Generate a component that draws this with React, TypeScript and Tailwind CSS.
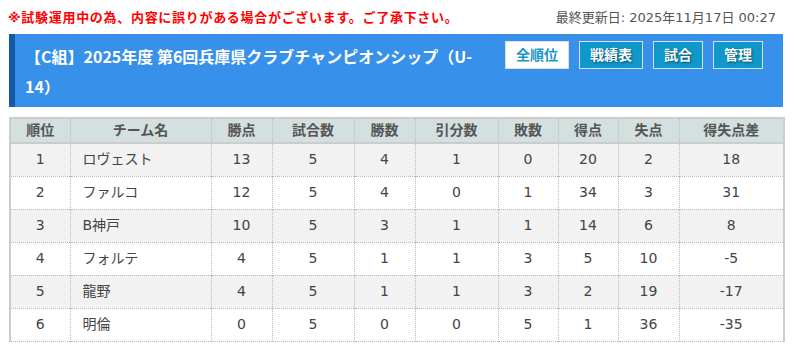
import React from "react";

const rows = [
  ["1", "ロヴェスト", "13", "5", "4", "1", "0", "20", "2", "18"],
  ["2", "ファルコ", "12", "5", "4", "0", "1", "34", "3", "31"],
  ["3", "B神戸", "10", "5", "3", "1", "1", "14", "6", "8"],
  ["4", "フォルテ", "4", "5", "1", "1", "3", "5", "10", "-5"],
  ["5", "龍野", "4", "5", "1", "1", "3", "2", "19", "-17"],
  ["6", "明倫", "0", "5", "0", "0", "5", "1", "36", "-35"],
];

const heads = ["順位", "チーム名", "勝点", "試合数", "勝数", "引分数", "敗数", "得点", "失点", "得失点差"];
const widths = [60, 141, 61, 82, 61, 83, 60, 60, 61, 105];

const font = { fontFamily: '"DejaVu Sans", "Noto Sans CJK JP", sans-serif' };

export default function App() {
  return (
    <div className="w-[796px] h-[351px] bg-white overflow-hidden" style={font}>
      <div className="flex items-center justify-between h-[34px] pl-[8px] pr-[20px] pt-[2px]">
        <span className="text-[13px] font-bold text-[#ff0000] tracking-[0.7px]">
          ※試験運用中の為、内容に誤りがある場合がございます。ご了承下さい。
        </span>
        <span className="text-[13px] text-[#555]">最終更新日: 2025年11月17日 00:27</span>
      </div>
      <div className="ml-[9px] w-[774px] flex bg-[#3790ea] border-l-[6px] border-[#1659a3] pt-[7px] pb-[6px] pl-[10px] pr-[20px]">
        <div
          className="flex-1 text-white font-bold text-[16px] leading-[30px] whitespace-nowrap"
          style={{ fontFamily: '"Noto Sans CJK JP", "Noto Sans", sans-serif' }}
        >
          【C組】2025年度 第6回兵庫県クラブチャンピオンシップ（U-
          <br />
          14）
        </div>
        <div className="flex gap-[10px] items-start">
          <div className="w-[64px] h-[28px] flex items-center justify-center bg-white border border-[#ddd] text-[#1a93c9] font-bold text-[14px]">
            全順位
          </div>
          <div className="w-[64px] h-[28px] flex items-center justify-center bg-[#0f98c9] border border-[#dde] text-white font-bold text-[14px] [text-shadow:1px_1px_2px_rgba(0,0,0,0.5)]">
            戦績表
          </div>
          <div className="w-[50px] h-[28px] flex items-center justify-center bg-[#0f98c9] border border-[#dde] text-white font-bold text-[14px] [text-shadow:1px_1px_2px_rgba(0,0,0,0.5)]">
            試合
          </div>
          <div className="w-[50px] h-[28px] flex items-center justify-center bg-[#0f98c9] border border-[#dde] text-white font-bold text-[14px] [text-shadow:1px_1px_2px_rgba(0,0,0,0.5)]">
            管理
          </div>
        </div>
      </div>
      <table className="ml-[9px] mt-[10px] w-[774px] border-collapse table-fixed border-x-2 border-t-2 border-[#ccc] text-[14px]">
        <colgroup>
          {widths.map((w, i) => (
            <col key={i} style={{ width: w }} />
          ))}
        </colgroup>
        <thead>
          <tr className="h-[25px] bg-[#d4dfdf] border-b-2 border-[#ccc]">
            {heads.map((h, i) => (
              <th
                key={i}
                className="font-bold text-[#555] text-center border-l border-dotted border-[#bbb] first:border-l-0 p-0"
              >
                {h}
              </th>
            ))}
          </tr>
        </thead>
        <tbody>
          {rows.map((r, ri) => (
            <tr
              key={ri}
              className={`h-[33px] border-b border-dotted border-[#bbb] ${ri % 2 === 0 ? "bg-[#f2f2f2]" : "bg-white"}`}
            >
              {r.map((c, ci) => (
                <td
                  key={ci}
                  className={`text-[#444] p-0 border-l border-dotted border-[#bbb] first:border-l-0 ${
                    ci === 1 ? "text-left pl-[12px]" : "text-center"
                  }`}
                >
                  {c}
                </td>
              ))}
            </tr>
          ))}
        </tbody>
      </table>
    </div>
  );
}
